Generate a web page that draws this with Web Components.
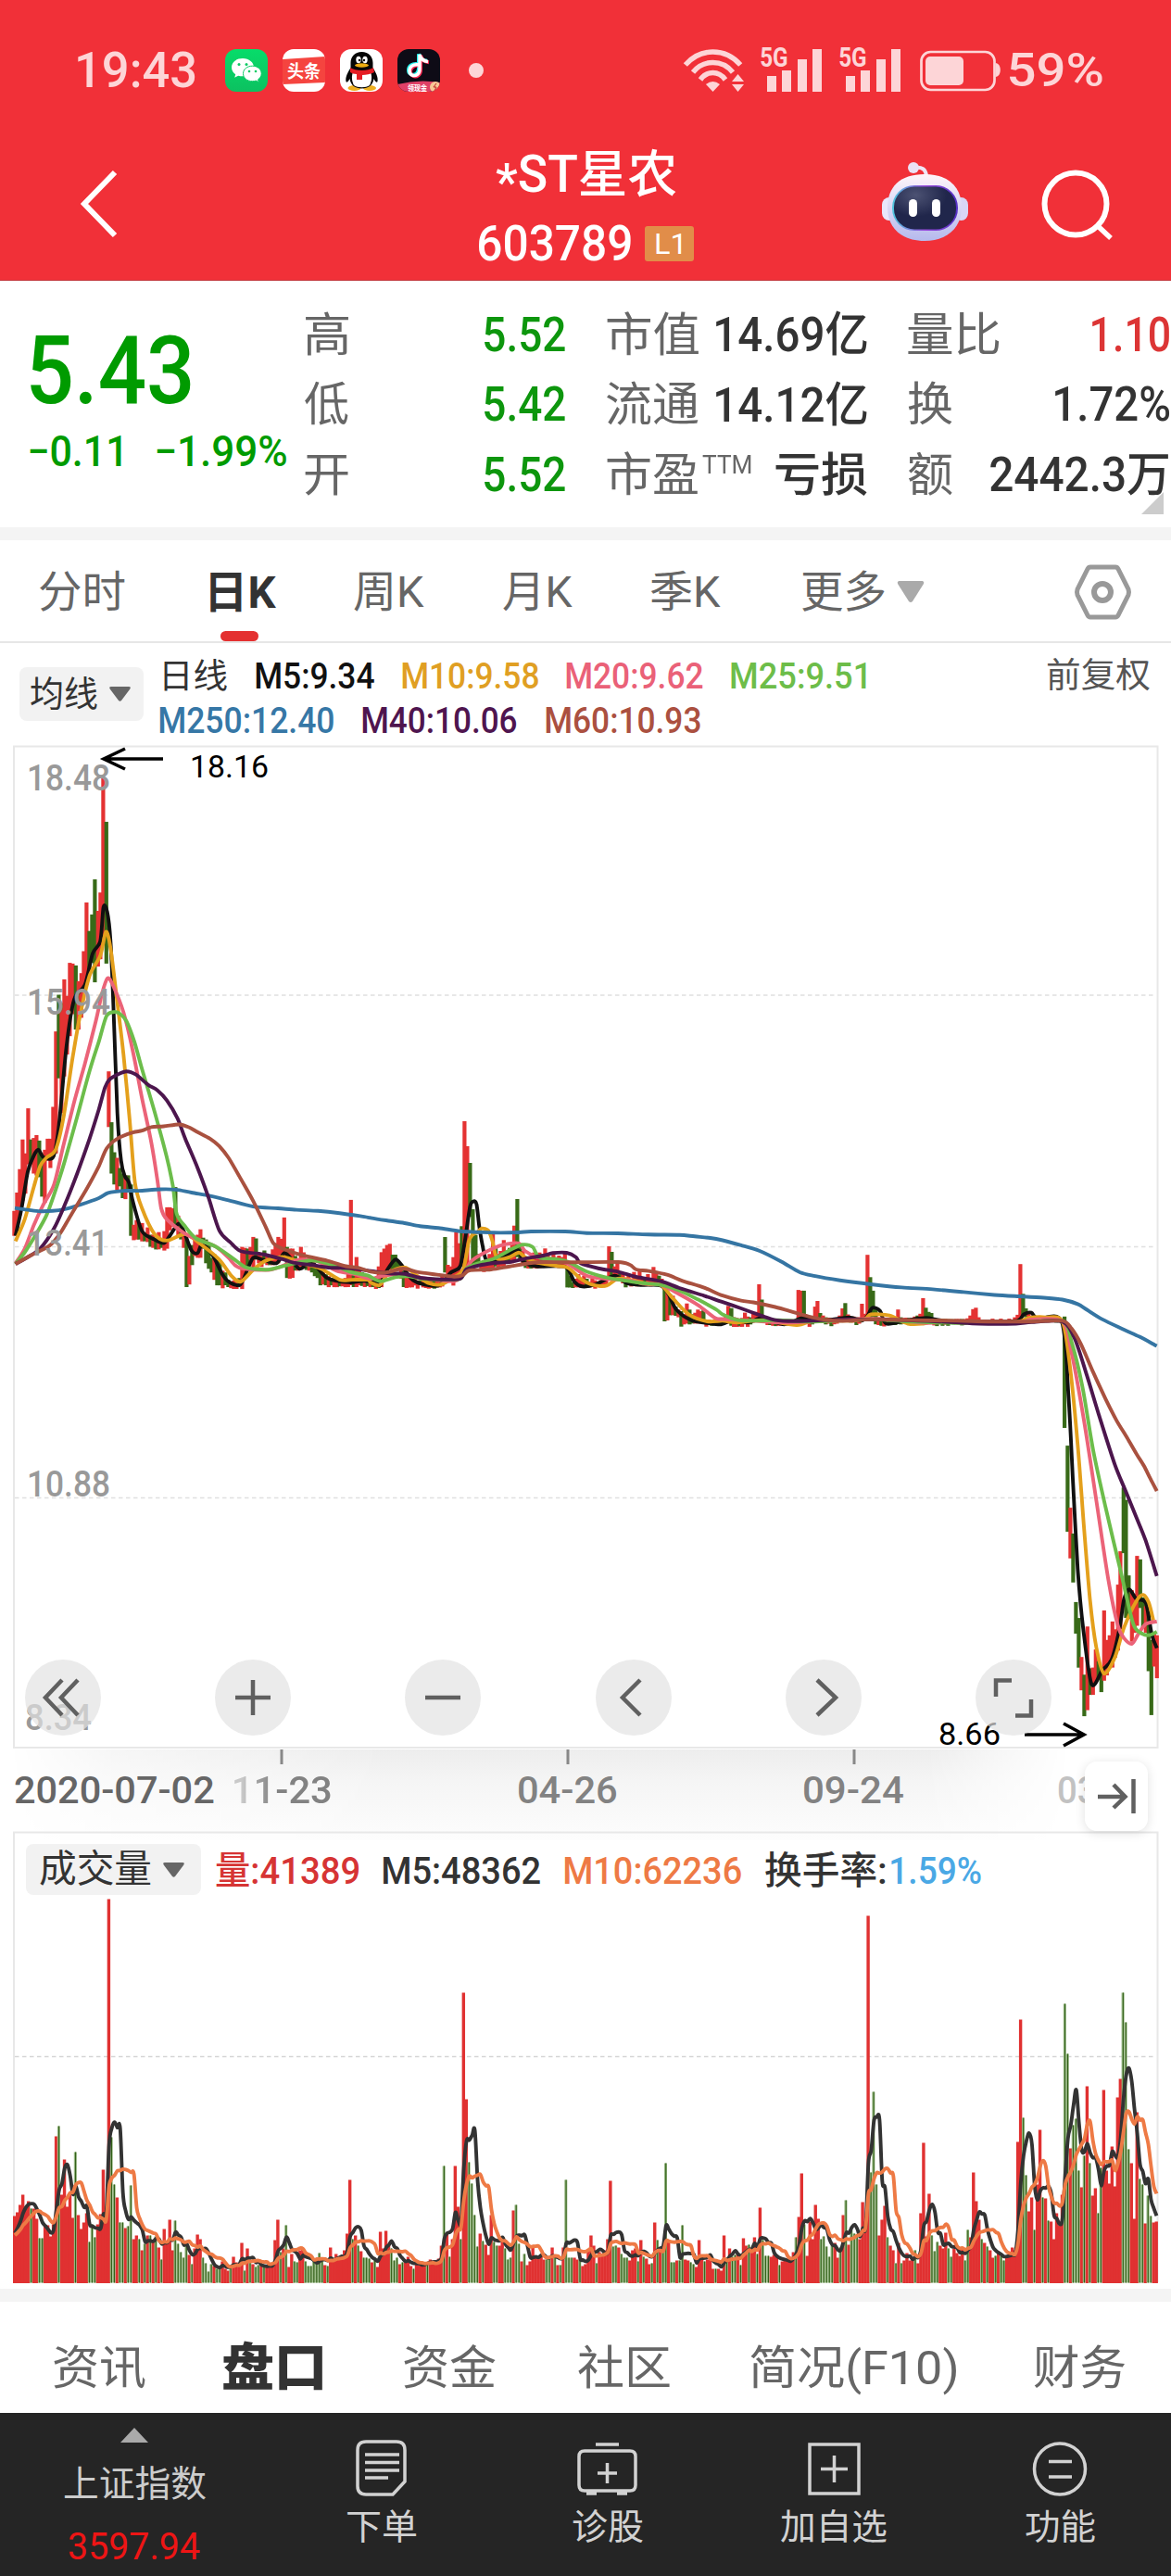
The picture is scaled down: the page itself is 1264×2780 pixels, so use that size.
<!DOCTYPE html>
<html lang="zh-CN">
<head>
<meta charset="utf-8">
<title>*ST星农 603789</title>
<style>
body{margin:0;background:#fff;width:1264px;height:2780px;overflow:hidden;font-family:Roboto,"Noto Sans CJK SC",sans-serif}
</style>
</head>
<body>
<stock-page></stock-page>
<script>
const BASE = '<style>*{box-sizing:border-box}:host{display:block}svg{display:block;overflow:visible}.row{display:flex;align-items:center}</style>';
const def = (name, html, after) => customElements.define(name, class extends HTMLElement {
  connectedCallback() {
    if (this.shadowRoot) return;
    const r = this.attachShadow({ mode: 'open' });
    r.innerHTML = BASE + (typeof html === 'function' ? html(this) : html);
    if (after) after(r, this);
  }
});

/* Text whose inked width is fitted to a given number of pixels. Attributes: w, s (size), b (weight), c (colour), m (left margin) */
const pen = document.createElement('canvas').getContext('2d');
customElements.define('fit-text', class extends HTMLElement {
  connectedCallback() {
    if (this.shadowRoot) return;
    const a = k => this.getAttribute(k);
    const w = +a('w'), s = +a('s'), b = a('b') || 400, text = this.textContent;
    pen.font = `${b} ${s}px Roboto,"Noto Sans CJK SC",sans-serif`;
    const m = pen.measureText(text);
    const k = w / (m.actualBoundingBoxLeft + m.actualBoundingBoxRight);
    this.attachShadow({ mode: 'open' }).innerHTML =
      `<style>:host{display:block;flex:none;width:${w}px;height:${s}px;margin-left:${a('m') || 0}px;font:${b} ${s}px/${s}px Roboto,"Noto Sans CJK SC",sans-serif;color:${a('c') || 'inherit'};white-space:nowrap}
      span{display:inline-block;transform-origin:0 50%;transform:translateX(${m.actualBoundingBoxLeft * k}px) scaleX(${k})}</style><span><slot></slot></span>`;
  }
});

def('status-bar', `<style>:host{height:152px}.bar{height:152px;padding-left:84px}.sig{display:flex;align-items:flex-start;height:48px;flex:none}svg{flex:none}</style>
<div class="row bar">
<fit-text w="127" s="53" b="500" c="#fdd5d7">19:43</fit-text>
<svg width="232" height="46" viewBox="0 0 232 46" style="margin-left:32px">
<defs><linearGradient id="wc" x2="0" y2="1"><stop stop-color="#07dc6a"/><stop offset="1" stop-color="#0cc160"/></linearGradient><clipPath id="tt"><rect x="62" width="46" height="46" rx="12"/></clipPath><clipPath id="dy"><rect x="186" width="46" height="46" rx="12"/></clipPath></defs>
<rect width="46" height="46" rx="12" fill="url(#wc)"/>
<path d="M19 10c-7 0-12 4.300-12 9.800 0 3 1.600 5.600 4.200 7.400l-1 3.500 4-2c1.500.4 3 .6 4.800.6 7 0 12-4.200 12-9.500S26 10 19 10z" fill="#fff"/><path d="M29.500 18.200c-5.800 0-10 3.600-10 8.200s4.200 8.300 10 8.300c1.400 0 2.700-.2 3.800-.6l3 1.700-.7-3c2.200-1.500 3.600-3.700 3.600-6.300 0-4.700-4-8.300-9.700-8.300z" fill="#fff" stroke="#0acb63" stroke-width="1"/>
<g fill="#0acb63"><circle cx="15" cy="16.500" r="1.500"/><circle cx="23" cy="16.500" r="1.500"/><circle cx="26" cy="24" r="1.300"/><circle cx="33" cy="24" r="1.300"/></g>
<rect x="62" width="46" height="46" rx="12" fill="#fff"/><path clip-path="url(#tt)" d="M62 11L108 8v28l-46 2z" fill="#f5443f"/>
<text x="67" y="31" font-size="19" font-weight="700" font-family="Noto Sans CJK SC,sans-serif" fill="#fff" textLength="36" lengthAdjust="spacingAndGlyphs">头条</text>
<rect x="124" width="46" height="46" rx="12" fill="#fff"/>
<ellipse cx="139.500" cy="42" rx="7" ry="3" fill="#eeb020"/><ellipse cx="156" cy="42" rx="7" ry="3" fill="#eeb020"/>
<path d="M147.500 3c-7.500 0-12 5-12 12v5c-3 5-6 10-5 15 1 2 3-1 4-3 1 7 6 10.500 13 10.500s12-3.500 13-10.500c1 2 3 5 4 3 1-5-2-10-5-15v-5c0-7-4.500-12-12-12z" fill="#060606"/>
<path d="M138 25h19c2 5 1 10-1 14-4 3-13 3-17 0-2-4-3-9-1-14z" fill="#fff"/><ellipse cx="144" cy="11.500" rx="2.700" ry="3.700" fill="#fff"/><ellipse cx="151" cy="11.500" rx="2.700" ry="3.700" fill="#fff"/><circle cx="145" cy="12" r="1.200"/><circle cx="150" cy="12" r="1.200"/><ellipse cx="147.500" cy="17.500" rx="7.500" ry="2.200" fill="#eeac10"/><path d="M135 20c6 4 19 4 25 0l1 5c-4 2-9 3-13 3v5h-6v-6c-3 0-5-1-7-2z" fill="#e51c23"/>
<g clip-path="url(#dy)"><rect x="186" width="46" height="46" fill="#0e0b16"/><path d="M186 38q23-6 46-2v10h-46z" fill="#df4067"/><circle cx="227" cy="41" r="6" fill="#f6c795"/><path d="M228 37l-3 4h3l-2 4" stroke="#b22" fill="none"/></g>
<g fill="none" stroke-width="4"><path d="M209 17c-6-1-10 2-10 6.500s5 6.500 8.500 4c2-1.500 2.500-3 2.500-6V6c1 4 4 7 9 7.500" stroke="#26f4ee" transform="translate(-1 -.8)"/><path d="M209 17c-6-1-10 2-10 6.500s5 6.500 8.500 4c2-1.500 2.500-3 2.500-6V6c1 4 4 7 9 7.500" stroke="#fe2c55" transform="translate(1 .8)"/><path d="M209 17c-6-1-10 2-10 6.500s5 6.500 8.500 4c2-1.500 2.500-3 2.500-6V6c1 4 4 7 9 7.500" stroke="#fff" stroke-width="3.400"/></g>
<text x="197" y="45" font-size="8.500" font-weight="700" font-family="Noto Sans CJK SC,sans-serif" fill="#fff" textLength="21" lengthAdjust="spacingAndGlyphs">领现金</text>
</svg>
<svg width="16" height="16" style="margin-left:31px"><circle cx="8" cy="8" r="8" fill="#fdd5d7"/></svg>
<svg width="66" height="46" viewBox="0 0 66 46" style="margin-left:216px"><g fill="none" stroke="#fdd5d7" stroke-width="5.500"><path d="M1.800 17Q14 3 31.500 3T61.200 17"/><path d="M10 25Q18.500 14.500 31.500 14.500T53 25"/><path d="M18 33Q23.500 25.500 31.500 25.500T45 33"/></g><path d="M24 38q7.500-6 15 0L31.500 46zM52 35l6.500-8 6.500 8zM52 38l6.500 8 6.500-8z" fill="#fdd5d7"/></svg>
<div class="sig" style="margin-left:17px"><fit-text w="29" s="29" b="700" c="#fdd5d7" style="margin-top:-4px">5G</fit-text>
<svg width="60" height="48" style="margin-left:-23px"><path d="M1 30h10v17H1zM17 24h10v23H17zM34 12h10v35H34zM50 1h10v46H50z" fill="#fdd5d7"/></svg></div>
<div class="sig" style="margin-left:19px"><fit-text w="29" s="29" b="700" c="#fdd5d7" style="margin-top:-4px">5G</fit-text>
<svg width="60" height="48" style="margin-left:-23px"><path d="M1 30h10v17H1zM17 24h10v23H17zM34 12h10v35H34zM50 1h10v46H50z" fill="#fdd5d7"/></svg></div>
<svg width="88" height="45" style="margin-left:21px"><rect x="1.500" y="2" width="79" height="41" rx="10" fill="none" stroke="#fdd5d7" stroke-width="2.700"/><rect x="6" y="7" width="41" height="31" rx="5" fill="#fdd5d7"/><path d="M81.500 14c7 0 7 15 0 15z" fill="#fdd5d7"/></svg>
<fit-text w="100" s="50" b="500" c="#fdd5d7" m="9">59%</fit-text>
</div>`);

def('title-bar', `<style>:host{height:151px;color:#fff}.row{height:151px}.mid{width:240px;margin-left:391px;height:151px}.row.top{height:73px}.row.bot{height:78px;margin-top:-1px}.row.l1{width:53px;height:38px;background:#e18d49;border-radius:3px;margin-left:15px}.ast{display:inline-block;vertical-align:-.17em}</style>
<div class="row">
<svg width="38" height="74" style="margin:-15px 0 0 87px"><path d="M37 3L4 37L37 71" fill="none" stroke="#fff" stroke-width="6"/></svg>
<div class="mid"><div class="row top"><fit-text w="195" s="55" b="500" m="19"><span class="ast">*</span>ST星农</fit-text></div>
<div class="row bot"><fit-text w="164" s="54" b="500" m="1">603789</fit-text><div class="row l1"><fit-text w="28" s="31" m="12">L1</fit-text></div></div></div>
<svg width="94" height="88" viewBox="0 0 94 88" style="margin:-20px 0 0 196px"><defs><linearGradient id="h" x2="0" y2="1"><stop stop-color="#fff5fa"/><stop offset="1" stop-color="#b5b9ed"/></linearGradient><linearGradient id="v"><stop stop-color="#4dc7dc"/><stop offset=".5" stop-color="#9a4bdc"/><stop offset="1" stop-color="#5430c5"/></linearGradient><radialGradient id="f" cx=".35" cy=".2"><stop stop-color="#4c5273"/><stop offset="1" stop-color="#20264b"/></radialGradient></defs>
<rect y="39" width="16" height="25" rx="8" fill="#e9e6fa"/><rect x="78" y="39" width="15" height="25" rx="8" fill="#d9d6f5"/><path d="M35 7q12-2 13 9" fill="none" stroke="#efe6f4" stroke-width="4"/><circle cx="34" cy="7" r="6" fill="#ebe1f5"/><path d="M46 14c27 0 40 15 40 36S71 86 46 86 6 72 6 50s13-36 40-36z" fill="url(#h)"/><rect x="11" y="26" width="71" height="49" rx="24" fill="url(#v)"/><rect x="13" y="27.500" width="67" height="46" rx="22" fill="url(#f)"/><rect x="29" y="41" width="9" height="19" rx="4.500" fill="#fff"/><rect x="54" y="41" width="9" height="19" rx="4.500" fill="#fff"/></svg>
<svg width="78" height="78" style="margin:-14px 0 0 78px"><circle cx="37" cy="38" r="33.500" fill="none" stroke="#fff" stroke-width="6"/><path d="M60 61L75 75" stroke="#fff" stroke-width="5.500"/></svg>
</div>`);

def('quote-panel', `<style>:host{height:266px;color:#333}.row{align-items:flex-start}.now{width:329px;color:#009b00}.rows{padding-top:21px}.r{display:flex;align-items:center;height:75.500px}.l{color:#666}.tri{width:24px;height:24px;background:#ccc;clip-path:polygon(100% 0,100% 100%,0 100%);margin:-38px 0 0 1232px}</style>
<div class="row" style="height:266px"><div class="now"><fit-text w="173" s="102" b="500" m="33" style="margin-top:46px">5.43</fit-text>
<div class="row" style="margin-top:13px"><fit-text w="99" s="46" b="500" m="32">−0.11</fit-text><fit-text w="140" s="46" b="500" m="38">−1.99%</fit-text></div></div>
<div class="rows" style="width:326px">
<div class="r"><fit-text class="l" w="47" s="50">高</fit-text><fit-text w="87" s="52" b="500" m="147" c="#0d960d">5.52</fit-text></div>
<div class="r"><fit-text class="l" w="47" s="50">低</fit-text><fit-text w="87" s="52" b="500" m="147" c="#0d960d">5.42</fit-text></div>
<div class="r"><fit-text class="l" w="47" s="50">开</fit-text><fit-text w="87" s="52" b="500" m="147" c="#0d960d">5.52</fit-text></div></div>
<div class="rows" style="width:325px">
<div class="r"><fit-text class="l" w="99" s="50">市值</fit-text><fit-text w="163" s="51" b="500" m="19">14.69亿</fit-text></div>
<div class="r"><fit-text class="l" w="99" s="50">流通</fit-text><fit-text w="163" s="51" b="500" m="19">14.12亿</fit-text></div>
<div class="r"><fit-text class="l" w="98" s="50">市盈</fit-text><fit-text class="l" w="53" s="27" m="5" style="margin-top:-20px">TTM</fit-text><fit-text w="99" s="50" b="500" m="26">亏损</fit-text></div></div>
<div class="rows">
<div class="r"><fit-text class="l" w="99" s="50">量比</fit-text><fit-text w="83" s="52" b="500" m="100" c="#dc3535">1.10</fit-text></div>
<div class="r"><fit-text class="l" w="48" s="50">换</fit-text><fit-text w="123" s="52" b="500" m="111">1.72%</fit-text></div>
<div class="r"><fit-text class="l" w="48" s="50">额</fit-text><fit-text w="192" s="51" b="500" m="41">2442.3万</fit-text></div></div></div>
<div class="tri"></div>`);

def('period-tabs', `<style>:host{height:125px;border-top:14px solid #f4f4f4;border-bottom:2px solid #e6e6e6;color:#666}.row{height:111px}.on{width:72px;height:109px;margin:-2px 0 0 91px;display:flex;flex-direction:column;align-items:center;padding-top:33px}.bar{width:41px;height:11px;border-radius:5.500px;background:#e43030;margin:auto 8px 0 0}</style>
<div class="row"><fit-text w="92" s="47" m="43">分时</fit-text><div class="on"><fit-text w="71" s="48" b="700" c="#333">日K</fit-text><div class="bar"></div></div>
<fit-text w="76" s="47" m="84">周K</fit-text><fit-text w="75" s="47" m="85">月K</fit-text><fit-text w="76" s="47" m="84">季K</fit-text><fit-text w="89" s="47" m="88">更多</fit-text>
<svg width="30" height="24" style="margin-left:13px"><path d="M2 0H28Q30 1 29 3L17 22Q15 24 13 22L1 3Q0 1 2 0z" fill="#aaa"/></svg>
<svg width="64" height="60" style="margin-left:161px"><path d="M18 3H45Q47 3 48 5L59 27Q60 30 59 33L48 55Q47 57 45 57H18Q16 57 15 55L4 33Q3 30 4 27L15 5Q16 3 18 3z" fill="none" stroke="#999" stroke-width="5"/><circle cx="31" cy="30" r="9" fill="none" stroke="#999" stroke-width="6"/></svg></div>`);

def('pick-button', e => `<style>:host{flex:none;background:#f2f2f2;border-radius:8px;color:#333}.row{height:100%}</style><div class="row"><slot></slot><svg width="23" height="16" style="margin-left:13px"><path d="M2 0H21Q24 0 22 3L13 15Q11.500 16.500 10 15L1 3Q-1 0 2 0z" fill="#666"/></svg></div>`);

def('ma-legend', `<style>:host{height:110px}.wrap{display:flex}pick-button{width:134px;height:58px;margin:26px 0 0 21px}.lines{width:950px;padding-top:12px}.row{height:48px}</style>
<div class="wrap"><pick-button><fit-text w="72" s="38" m="12">均线</fit-text></pick-button>
<div class="lines"><div class="row"><fit-text w="68" s="37" m="22" c="#333">日线</fit-text><fit-text w="128" s="38" b="500" m="31" c="#111">M5:9.34</fit-text><fit-text w="147" s="38" b="500" m="30" c="#e09f23">M10:9.58</fit-text><fit-text w="148" s="38" b="500" m="30" c="#ea6178">M20:9.62</fit-text><fit-text w="146" s="38" b="500" m="30" c="#6dbd49">M25:9.51</fit-text></div>
<div class="row"><fit-text w="188" s="38" b="500" m="17" c="#3677a6">M250:12.40</fit-text><fit-text w="167" s="38" b="500" m="31" c="#4f154f">M40:10.06</fit-text><fit-text w="167" s="38" b="500" m="31" c="#ab5040">M60:10.93</fit-text></div></div>
<fit-text w="111" s="37" m="25" c="#555" style="margin-top:17px">前复权</fit-text></div>`);

/* ---- price chart data: each frame has an origin and a pixel size per unit ---- */
const FR = { A: [0, 790, 1/3, 1/2.529], B: [400, 1180, 1/3, 1/3], C: [780, 1280, 1/3, 1/2.6133] };
const BARS = {
A: `46r1307-1375 55r1257-1360 64r1193-1320 73r1112-1280 82r1150-1260 91r1027-1180 100g1112-1180 109r1108-1205 118r1100-1210 127g1115-1215 136g1150-1268 145r1140-1285 154r1110-1170 163r1110-1190 172r1023-1160 181r817-1150 190g717-945 199r740-1040 208r675-940 217r720-880 226r630-830 235r632-770 245g637-812 254r680-812 263r658-780 271r598-700 280r465-690 289g543-650 298g498-630 307g402-683 317r488-640 325r438-620 334r126-560 344g245-632 352r926-1078 361g1065-1205 370g1147-1235 379r1162-1250 388g1190-1240 397g1205-1272 406r1210-1275 415g1210-1250 424g1235-1375 433r1345-1387 442r1332-1385 451g1340-1385 460r1340-1390 469g1365-1390 478r1352-1392 487g1372-1405 496r1372-1408 505g1380-1412 514r1365-1412 523g1390-1408 532r1362-1415 541r1297-1410 550r1297-1360 559r1300-1350 568g1242-1345 577r1320-1380 586g1342-1385 595r1375-1408 604g1385-1515 613r1430-1508 622g1400-1455 631r1380-1430 640r1372-1435 649r1357-1435 658g1380-1410 667g1385-1450 676g1400-1465 685g1435-1475 694r1425-1495 703g1440-1510 712g1445-1510 721r1470-1518 730g1475-1510 739g1495-1515 748r1500-1518 757r1497-1520 766r1497-1520 775g1490-1515 784r1405-1520 793r1408-1480 802g1410-1460 811r1405-1440 820r1378-1465 829g1382-1440 838r1420-1450 847r1430-1460 856g1415-1450 865r1430-1455 874g1430-1455 883r1412-1455 892r1395-1450 901r1378-1450 910r1383-1440 920r1325-1440 929g1405-1490 938r1410-1492 947r1410-1490 956g1430-1470 965r1440-1470 974r1405-1460 983r1420-1455 992g1440-1468 1001r1445-1470 1010g1450-1475 1019g1460-1485 1028g1460-1490 1037g1470-1510 1046r1475-1508 1055g1480-1510 1064r1485-1515 1073g1490-1510 1082r1492-1515 1091r1492-1515 1100g1495-1513 1109r1495-1513 1118r1490-1515 1127r1455-1515 1136r1277-1510 1145g1460-1515 1154r1433-1515 1163r1465-1510 1172g1475-1512 1181r1480-1515 1190g1490-1512 1199r1492-1515 1208g1495-1515 1217r1500-1520 1226g1490-1517 1235r1420-1515 1244r1410-1490 1253r1400-1480`,
B: `26r560-600 36r515-600 45r520-600 54r498-580 62r487-570 71g522-570 80g522-570 89g540-570 98r560-600 107g575-627 116r580-630 125r590-628 134r595-628 143r600-622 152r605-632 161g605-620 170r600-628 179r605-630 188r600-632 197r605-630 206g600-632 215r600-625 224r605-628 232r590-625 241g465-580 250r555-600 259r560-600 268r530-622 277r450-610 286r485-600 295g430-560 304r90-570 313r171-560 322g225-400 331g375-555 340g458-560 349g520-560 358r545-575 367r540-578 376r545-570 385r520-575 396r455-570 405g500-560 414r520-570 421r510-560 431r475-560 440g510-550 450g500-545 458r490-550 465r428-540 475g342-530 484g490-540 493r510-555 502g530-565 511r540-567 520g545-567 529r515-565 538r535-567 547r515-565 556g520-560 565r502-550 574r520-550 583r530-552 592r515-552 601r530-562 610r525-565 619r530-562 629r510-560 637g560-628 646g590-628 655g612-630 664r600-628 673r585-628 682r600-628 691r590-625 700g600-625 709r610-628 718r600-625 727r605-632 736r610-626 745r605-628 754r608-628 763r600-622 772r495-605 781g513-600 790r560-600 799r540-600 808g580-605 817r585-615 826g600-628 835r590-615 844r605-625 853r578-620 862r600-625 871r575-620 880r600-624 889g600-624 898r585-620 907r600-625 916r562-620 925r580-620 934g590-620 943r600-625 952g615-738 961r640-735 970g650-718 979r655-718 988g690-720 997r700-725 1006g705-755 1015r715-748 1024r680-745 1033g700-748 1042g715-745 1051r710-745 1060r700-745 1069r705-745 1078g700-745 1087r735-755 1096r733-748 1105g735-752 1114r733-748 1123r735-748 1132g732-750 1141r730-745 1150r715-745 1158r688-745 1168g695-752 1177g725-755 1186r738-755 1195r738-755`,
C: `18r340-385 27g345-385 36r370-397 45r372-397 54g378-394 63r372-397 72r357-390 81r368-397 90g370-390 99r360-385 109r355-380 118r277-375 127g320-380 136g368-384 145r372-392 154g375-392 163r375-394 172g378-395 181r380-394 190r378-394 199g380-394 208r378-393 217r377-394 226r377-394 235r377-390 245r293-380 254r295-380 263g295-380 272r365-384 281r372-397 290g370-390 299r340-385 307r324-380 316g358-380 325r365-386 334g370-390 343r371-388 352g375-395 361r375-390 370r375-388 379r365-384 388r345-380 397g330-380 406r362-383 415g368-385 424r368-385 433g370-392 442r370-388 451r332-380 460r360-380 469r194-375 478g257-375 487g295-370 496g345-390 505r370-392 514g374-394 523r374-396 532r374-390 541g372-390 550r370-392 559g370-392 568r348-385 577g370-390 586r372-388 595r371-385 604g372-389 613r372-391 622r368-385 631g365-385 640r360-383 649r316-380 658g343-378 667g355-378 676g358-380 685r373-393 694g374-395 703r374-390 712g376-394 721r375-391 730g376-394 739r376-388 748g376-390 757r375-390 766r375-389 775g375-393 784r375-391 793r373-389 802r365-382 811r347-378 820r343-380 829r370-384 847g377-391 874r374-389 901r374-389 928r374-389 946r370-385 955r363-381 964r220-375 973g304-365 982g345-370 991r355-378 1009g365-380 1027r370-385 1054r372-385 1080g370-385 1107g368-682 1117g732-975 1126r907-1050 1135g980-1118 1144g1173-1262 1153g1218-1358 1162r1328-1422 1171g1378-1495 1181r1242-1478 1190g1360-1435 1199r1358-1435 1208r1307-1400 1217g1340-1390 1226g1355-1427 1235r1197-1395 1244r1280-1380 1253r1267-1350 1262r1228-1358 1271r1250-1330 1280r1124-1310 1288r1030-1250 1298g850-1035 1306g885-1218 1315g1098-1220 1325r1140-1285 1334r1150-1260 1342r1043-1240 1352g1053-1190 1361g1160-1245 1370r1185-1260 1379g1200-1368 1388g1280-1492 1397r1260-1355 1406r1267-1388` };
const LINES = [
['#111','50,1375 70,1300 90,1200 110,1155 125,1140 140,1160 172,1160 190,1080 215,860 240,730 275,690 300,605 325,570 335,478 347,490 358,570 367,740 380,1040 392,1170 404,1212 418,1230 430,1280 460,1362 500,1385 530,1395 550,1375 578,1342 595,1362 620,1415 640,1422 655,1398 690,1430 720,1480 745,1503 778,1508 800,1470 820,1435 850,1440 895,1450 920,1422 940,1435 970,1465 1010,1448 1060,1490 1130,1502 1180,1498 1230,1507','30,620 55,570 80,538 100,555 130,598 160,615 220,622 260,580 290,560 305,480 322,368 332,350 343,358 352,430 362,490 375,540 405,540 430,530 478,508 495,545 540,560 630,562 660,610 685,625 730,618 790,590 830,615 880,620 940,622 965,650 990,700 1040,735 1100,745 1135,748 1160,738','30,375 80,385 130,372 200,390 260,372 320,380 410,370 450,380 470,365 485,343 510,352 530,388 600,378 660,372 720,380 880,382 955,380 975,362 1000,357 1020,375 1098,382 1120,590 1135,840 1150,1080 1168,1250 1195,1405 1230,1365 1260,1335 1285,1250 1300,1165 1317,1137 1340,1165 1370,1175 1390,1265 1406,1303'],
['#e4a01c','50,1390 80,1330 110,1240 130,1185 150,1162 180,1140 205,1055 235,890 260,770 290,665 325,610 343,545 358,590 378,725 400,880 420,1060 437,1230 460,1300 500,1370 540,1388 600,1370 650,1398 710,1440 750,1485 780,1500 820,1468 860,1443 920,1433 980,1450 1040,1465 1100,1495 1140,1495 1190,1495','0,612 30,620 60,580 110,563 150,590 190,615 230,618 270,595 300,570 318,480 330,458 345,450 360,437 382,445 395,480 410,535 450,530 480,515 500,530 540,548 600,558 640,565 680,600 720,620 765,622 800,600 850,605 900,618 940,620 980,665 1030,715 1090,738','0,380 50,385 130,378 240,392 300,378 400,380 460,375 480,362 540,365 600,388 650,388 700,380 860,385 960,382 990,372 1045,370 1100,382 1125,510 1150,730 1170,960 1190,1170 1210,1300 1235,1375 1270,1330 1300,1245 1340,1170 1362,1153 1380,1175 1395,1225'],
['#eb6378','50,1450 80,1410 110,1345 140,1290 175,1235 205,1130 240,1010 275,905 310,790 330,715 348,672 365,690 400,765 430,870 460,1000 490,1120 510,1225 522,1300 540,1330 600,1370 640,1385 700,1405 740,1435 775,1462 870,1468 930,1452 970,1440 1030,1445 1090,1470 1150,1480','0,600 40,590 100,585 150,595 210,603 270,608 300,585 330,540 400,500 440,488 480,485 500,510 540,530 600,540 640,552 700,590 760,600 840,605 880,616 940,620 1000,650 1060,685 1115,727','0,375 100,380 200,385 340,380 480,374 560,378 660,386 760,382 960,384 1000,376 1100,382 1130,470 1170,660 1210,885 1250,1115 1280,1240 1300,1275 1325,1291 1345,1265 1370,1235 1406,1228'],
['#6cbd4b','50,1452 80,1420 110,1380 150,1320 180,1250 210,1170 250,1050 290,925 320,845 345,775 370,764 390,770 410,790 435,845 460,920 500,1035 540,1160 560,1240 572,1315 600,1350 635,1382 700,1405 760,1440 800,1462 870,1467 930,1455 1010,1442 1080,1455 1140,1475 1190,1483','30,608 80,595 125,592 170,600 230,603 290,600 310,568 340,553 400,535 450,508 490,490 525,497 545,530 600,537 640,545 700,577 760,595 820,605 880,614 940,620 1000,638 1060,667 1120,700','0,362 50,378 110,380 180,378 300,382 480,376 600,382 760,386 960,384 1100,382 1130,440 1165,565 1200,745 1240,905 1290,1090 1330,1235 1360,1263 1385,1266 1406,1257'],
['#3575a3','48,1299 90,1304 130,1308 170,1307 210,1302 260,1290 320,1272 350,1258 400,1252 450,1252 520,1248 570,1249 620,1257 680,1266 740,1278 820,1295 900,1300 960,1304 1030,1307 1100,1313 1180,1323','0,403 50,411 110,420 160,430 220,436 290,446 350,449 400,451 480,450 520,447 630,447 700,452 800,453 900,457 1000,458 1050,463 1100,468','0,153 60,167 120,183 190,213 250,243 300,254 380,266 480,277 580,286 680,291 780,299 880,307 960,311 1040,315 1100,320 1150,333 1180,349 1230,376 1300,405 1350,425 1406,451'],
['#4c164d','50,1452 80,1438 130,1410 175,1355 210,1290 250,1205 290,1110 320,1030 340,970 355,948 380,935 410,926 440,935 480,963 510,978 540,1005 575,1055 600,1110 640,1190 675,1270 710,1360 745,1392 780,1417 850,1425 920,1440 950,1448 1010,1455 1070,1462 1130,1463','0,575 60,583 110,584 160,597 230,602 290,600 310,570 360,555 410,548 450,546 500,535 560,525 590,517 635,516 665,530 680,550 740,567 800,577 860,594 940,608 1000,630 1080,655','0,327 60,345 130,367 170,378 230,381 340,378 480,376 700,382 830,388 950,388 1000,384 1100,382 1140,430 1180,535 1220,650 1270,785 1305,860 1340,935 1370,1000 1406,1100'],
['#a9513f','50,1452 100,1428 160,1402 195,1368 230,1318 280,1248 320,1185 345,1137 380,1110 430,1093 460,1088 490,1078 530,1076 580,1071 610,1078 640,1092 680,1110 710,1130 740,1162 780,1220 820,1280 860,1350 885,1395 915,1410 980,1428 1060,1443 1120,1458 1160,1462','0,577 50,580 105,567 150,578 200,585 270,593 300,588 320,573 390,570 450,560 520,549 560,546 640,547 800,546 840,555 860,570 900,575 960,587 1010,607 1080,629','0,309 60,323 100,328 170,341 220,353 280,368 340,378 400,380 480,376 600,378 760,380 860,382 1000,382 1100,380 1130,402 1160,445 1200,525 1240,600 1275,660 1310,710 1340,755 1365,790 1385,825 1406,860']];

const pts = (f, s) => s.split(' ').map(p => { const [x, y] = p.split(',').map(Number), o = FR[f]; return [o[0] + x * o[2], o[1] + y * o[3]]; });
function smooth(P, t = 7) {
  let d = `M${P[0][0].toFixed(1)} ${P[0][1].toFixed(1)}`;
  for (let i = 0; i < P.length - 1; i++) {
    const a = P[i - 1] || P[i], b = P[i], c = P[i + 1], e = P[i + 2] || c;
    d += `C${[b[0] + (c[0] - a[0]) / t, b[1] + (c[1] - a[1]) / t, c[0] - (e[0] - b[0]) / t, c[1] - (e[1] - b[1]) / t, c[0], c[1]].map(n => n.toFixed(1)).join(' ')}`;
  }
  return d;
}

def('round-button', e => {
  const g = { first: 'M40 22L22 41L40 60M57 22L39 41L57 60', plus: 'M22 41H60M41 22V60', minus: 'M22 41H60', prev: 'M48 22L29 41L48 60', next: 'M34 22L54 41L34 60', full: 'M39 22.500H22V40M60 43V60.500H43' };
  return `<style>:host{width:82px;height:82px;border-radius:50%;background:rgba(226,226,226,.69)}</style><svg width="82" height="82"><path d="${g[e.getAttribute('kind')]}" fill="none" stroke="#606060" stroke-width="4.500"/></svg>`;
});

def('price-chart', `<style>:host{position:relative;height:1084px}.tools{position:absolute;left:27px;right:129px;top:987px;display:flex;justify-content:space-between}</style>
<svg width="1264" height="1084" viewBox="0 804 1264 1084"></svg>
<div class="tools"><round-button kind="first"></round-button><round-button kind="plus"></round-button><round-button kind="minus"></round-button><round-button kind="prev"></round-button><round-button kind="next"></round-button><round-button kind="full"></round-button></div>`, r => {
  let s = '<rect x="15" y="805.500" width="1234.500" height="1080.500" fill="none" stroke="#e8e8e8" stroke-width="2"/>';
  for (const y of [1074, 1345.5, 1616.5]) s += `<path d="M16 ${y}H1248" stroke="#e0e0e0" stroke-width="1.300" stroke-dasharray="4.500 3.500"/>`;
  for (const f in BARS) for (const b of BARS[f].split(' ')) {
    const m = b.match(/(\d+)([rg])(\d+)-(\d+)/), o = FR[f];
    const x = o[0] + m[1] * o[2], y = o[1] + m[3] * o[3], h = (m[4] - m[3]) * o[3];
    s += `<rect x="${(x - 2).toFixed(1)}" y="${y.toFixed(1)}" width="4.200" height="${h.toFixed(1)}" fill="${m[2] === 'r' ? '#e43232' : '#386a18'}"/>`;
  }
  for (const [c, a, b, d] of LINES) s += `<path d="${smooth([...pts('A', a), ...pts('B', b), ...pts('C', d)])}" fill="none" stroke="${c}" stroke-width="3.900" stroke-linejoin="round"/>`;
  const T = (x, y, w, t, z, c, b = 400) => `<text x="${x}" y="${y}" textLength="${w}" lengthAdjust="spacingAndGlyphs" font-size="${z}" font-weight="${b}" fill="${c}">${t}</text>`;
  s += T(29, 853, 90, '18.48', 39, '#999', 500) + T(29, 1095, 90, '15.94', 39, '#999', 500) + T(29, 1355, 88, '13.41', 39, '#999', 500) + T(29, 1615, 90, '10.88', 39, '#999', 500) + T(27, 1867, 72, '8.34', 39, '#999', 500);
  s += T(205, 839, 85, '18.16', 33, '#000') + T(1013, 1883, 67, '8.66', 33, '#000');
  s += '<path d="M176 819H112M135 808L112 819L135 830M1106 1872H1170M1148 1860L1170 1872L1148 1884" fill="none" stroke="#000" stroke-width="3.600"/>';
  r.querySelector('svg').innerHTML = s;
});

def('date-axis', `<style>:host{height:88px;position:relative;color:#828282}.shade{height:98px;margin-bottom:-98px;background:linear-gradient(#ededed,#f5f5f5 35%,#fafafa 75%,#fdfdfd);-webkit-mask-image:linear-gradient(90deg,transparent 10px,rgba(0,0,0,.5) 120px,#000 420px,#000 1000px,transparent 1155px);mask-image:linear-gradient(90deg,transparent 10px,rgba(0,0,0,.5) 120px,#000 420px,#000 1000px,transparent 1155px)}.ticks{position:relative}.row{height:56px;padding-left:16px;position:relative}.fade{-webkit-mask-image:linear-gradient(90deg,rgba(0,0,0,.4) 8px,rgba(0,0,0,.75) 26px,#000 45px);mask-image:linear-gradient(90deg,rgba(0,0,0,.4) 8px,rgba(0,0,0,.75) 26px,#000 45px)}.end{position:absolute;left:1171px;top:13px;width:68px;height:75px;border-radius:13px;background:#fff;box-shadow:0 2px 12px rgba(0,0,0,.12);z-index:2}</style>
<div class="shade"></div><svg class="ticks" width="1264" height="17"><path d="M304 0V16M613 0V16M922 0V16" stroke="#888" stroke-width="3"/></svg>
<div class="row"><fit-text w="215" s="40" b="500" c="#666">2020-07-02</fit-text><fit-text class="fade" w="104" s="40" b="500" m="22">11-23</fit-text><fit-text w="106" s="40" b="500" m="203">04-26</fit-text><fit-text w="107" s="40" b="500" m="202">09-24</fit-text><fit-text w="40" s="40" b="500" m="168" c="#c2c2c2">03</fit-text></div>
<div class="end"><svg width="68" height="75"><path d="M14 38H43M31 25L43.500 38L31 50M52.500 19V56" fill="none" stroke="#606060" stroke-width="4.500"/></svg></div>`);

/* Volumes as bar heights in px; a trailing g marks a falling day */
const VOL = `72 76 84 95 80 88 80g 80 69 48g 48g 62 62 50 63 158 169g 95 133 82 97 70 141g 73 58 65 75 44g 63g 49g 63 74 122 68 414 157g 106g 92 65g 65g 59 61g 105g 47 51 47g 35 42g 51 51g 45 50g 38 25g 58 45 68 35 67g 42g 33g 27g 42g 30 20g 37 52 47 27g 21g 12g 20g 18 15g 17g 23 15 13 18g 28 22 18 43 13g 37 22g 20 17g 19g 18 17g 18 19 20 46 68 33g 37 62g 17 31 23g 22g 35 37 23g 18g 18g 23g 25g 32g 26g 19 18g 38 23 31 25 26 35 53 111 47g 51 40g 34 27g 27g 26g 22 25g 17 55 37 56 40 37g 24g 27g 20 22g 22 28 18 15g 21 21 21 20 22g 25 24 22 26 40 126g 53 28g 47 126 82 47g 313 198 130g 107g 73g 39g 53 45g 41 30 73 44g 40g 40 48 37g 25g 27g 78 84g 42g 23 31g 19 23 40 27 28 30 25 25g 27g 38 27g 19 19g 38 111g 27g 27g 27 25 25g 18 20
35 51 40 21g 33 30 35 47 110 39g 40g 38 31g 27g 27g 24 35 37 23g 46 28g 26 20 21g 65 46g 35 33g 129g 45 22g 22g 24 24g 62g 25 24 22g 20g 17 46 27 23g 25 28 15 15g 15 13 51 27g 37 28g 30g 32 19g 48 40 41g 35 49 31g 81 46g 29g 29g 28 30 28 19g 23 25 25 25 33 49g 71 118 63g 29 66 47 84 69 47g 50g 39g 28g 40g 43 27 38g 73 89g 41 57g 53g 50g 47 87 66 396 119g 206g 106g 51 68 83 49g 40 35 21g 43 21g 24 32 24 25 35g 21 75 151 50 96 51g 34g 44g 40 37 54 37g 28g 37 32 29 37 24g 57g 49 119 88 68 47g 43 39g 35 27 29g 32 29g 24g 28 33 38 35 152 284 178g 116g 77 92 57g 106 165 92g 91 67g 66 47 75 62 95 301g 247g 145 170g 177g 121g 103 137g 212 129g 94 102 75g 124g 208 121 107 147 104 200 220 313g 281g 144g 129 69 184 112g 106g 64 94g 72g 65 66`.split(/\s+/);

def('volume-chart', `<style>:host{height:494px;position:relative}.row{height:83px;margin-bottom:-83px;position:relative}pick-button{width:189px;height:55px;margin-left:28px}.row>fit-text{margin-top:3px}</style>
<div class="row"><pick-button><fit-text w="120" s="41" m="15">成交量</fit-text></pick-button><fit-text w="154" s="41" b="500" m="16" c="#d63434">量:41389</fit-text><fit-text w="170" s="41" b="500" m="26" c="#333">M5:48362</fit-text><fit-text w="191" s="41" b="500" m="26" c="#ee7a45">M10:62236</fit-text><fit-text w="130" s="41" b="500" m="26" c="#333">换手率:</fit-text><fit-text w="97" s="41" b="500" m="6" c="#4aa8e5">1.59%</fit-text></div>
<svg width="1264" height="494" viewBox="0 1976 1264 494"></svg>`, r => {
  let s = '<path d="M15 2463V1977.500H1249.500V2463" fill="none" stroke="#e8e8e8" stroke-width="2"/><path d="M16 2219.500H1248" stroke="#d5d5d5" stroke-width="1.300" stroke-dasharray="4.500 3.500"/>';
  const v = VOL.map(parseFloat), P = 1235.5 / v.length, B = 2463.5;
  VOL.forEach((t, i) => {
    const x = 14 + i * P, y = B - v[i];
    s += t.endsWith('g') ? `<rect x="${x.toFixed(2)}" y="${y}" width="3" height="${v[i]}" fill="#94b57f"/><rect x="${(x + 1.2).toFixed(2)}" y="${y}" width="1.100" height="${v[i]}" fill="#33601a"/>` : `<rect x="${x.toFixed(2)}" y="${y}" width="3.400" height="${v[i] + .5}" fill="#e03131"/>`;
  });
  const ma = (n, c) => {
    const p = v.map((_, i) => { let t = 0; for (let k = 0; k < n; k++) t += i - k < 0 ? 49 : v[i - k]; return [16 + i * P, B - t / n]; });
    s += `<path d="${smooth(p, 6)}" fill="none" stroke="${c}" stroke-width="3.900" stroke-linejoin="round"/>`;
  };
  ma(5, '#333'); ma(10, '#ee7a45');
  r.querySelector('svg').innerHTML = s;
});

def('info-tabs', `<style>:host{height:134px;border-top:14px solid #f4f4f4;color:#666}.row{height:143px}</style>
<div class="row"><fit-text w="99" s="50" m="58">资讯</fit-text><fit-text w="107" s="55" b="900" m="84" c="#333">盘口</fit-text><fit-text w="99" s="50" m="88">资金</fit-text><fit-text w="99" s="50" m="89">社区</fit-text><fit-text w="222" s="50" m="87">简况(F10)</fit-text><fit-text w="99" s="50" m="84">财务</fit-text></div>`);

def('nav-item', e => `<style>:host{flex:none;width:120px}div{display:flex;flex-direction:column;align-items:center}svg{margin-bottom:12px}</style><div><svg width="66" height="64" viewBox="0 0 66 64" fill="none" stroke="#d2d2d2" stroke-width="3.500">${{
  order: '<path d="M16 3H49Q58 3 58 12V46L45 60H16Q7 60 7 51V12Q7 3 16 3zM15 17H52M15 25.500H52M15 34H52M15 42H40"/>',
  doctor: '<path d="M8 13H57Q63 13 63 19V50Q63 56 57 56H8Q2 56 2 50V19Q2 13 8 13zM20 6H45M10 59H21M43 59H54M22 37H43M32.500 26V48"/>',
  add: '<path d="M7 6H60V59H7zM19 32.500H48M33.500 18V47"/>',
  menu: '<circle cx="33" cy="32.500" r="27.500"/><path d="M21 24.500H46M21 41H46"/>' }[e.getAttribute('kind')]}</svg><slot></slot></div>`);

def('bottom-nav', `<style>:host{height:176px;background:#252525;color:#d2d2d2}.nav{display:flex;padding-top:28px;height:176px}.idx{width:290px;margin-top:-12px;display:flex;flex-direction:column;align-items:center}nav-item+nav-item{margin-left:124px}</style>
<div class="nav"><div class="idx"><svg width="30" height="16"><path d="M0 16L15 0L30 16z" fill="#aaa"/></svg><fit-text w="153" s="39" c="#ccc" style="margin-top:26px">上证指数</fit-text><fit-text w="142" s="41" c="#ee1515" style="margin-top:27px">3597.94</fit-text></div>
<nav-item kind="order" style="margin-left:62px"><fit-text w="75" s="38">下单</fit-text></nav-item><nav-item kind="doctor"><fit-text w="76" s="38">诊股</fit-text></nav-item><nav-item kind="add"><fit-text w="114" s="38">加自选</fit-text></nav-item><nav-item kind="menu"><fit-text w="75" s="38">功能</fit-text></nav-item></div>`);

def('stock-page', `<style>:host{width:1264px}header{background:#f13038;height:303px;border-bottom:1px solid #c3363b}</style>
<header><status-bar></status-bar><title-bar></title-bar></header>
<quote-panel></quote-panel><period-tabs></period-tabs><ma-legend></ma-legend><price-chart></price-chart><date-axis></date-axis><volume-chart></volume-chart><info-tabs></info-tabs><bottom-nav></bottom-nav>`);
</script>
</body>
</html>
